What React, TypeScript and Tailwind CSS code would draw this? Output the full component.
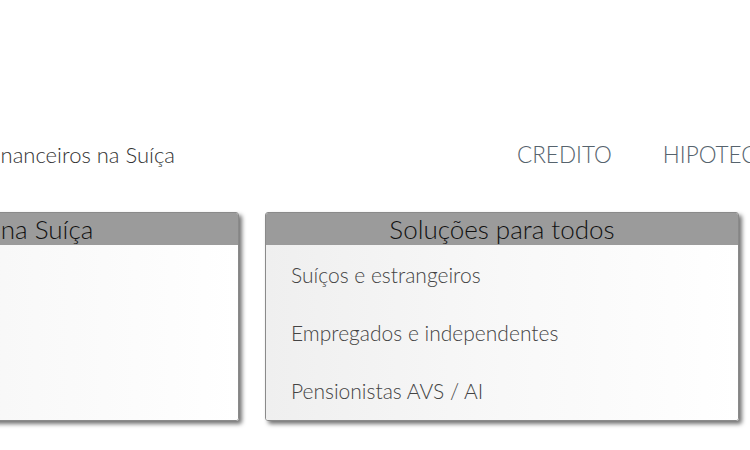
const items = ["Suíços e estrangeiros", "Empregados e independentes", "Pensionistas AVS / AI"];

function Card({ title, rows }: { title: string; rows: string[] }) {
    return (
        <div className="w-[474px] h-[209px] flex flex-col border border-[#8a8a8a] rounded-[3px] shadow-[3px_3px_4px_rgba(0,0,0,0.55)] overflow-hidden">
            <div className="h-[32px] bg-[#9b9b9b] text-[#111] text-[26px] leading-[33px] text-center">{title}</div>
            <ul className="flex-1 bg-linear-to-r from-[#efefef] via-[#f8f8f8] to-white pl-[25px] pt-[17px]">
                {rows.map((r) => (
                    <li key={r} className="h-[58px] text-[21px] leading-[26px] text-[#444]">{r}</li>
                ))}
            </ul>
        </div>
    );
}

export default function App() {
    return (
        <div className="w-[750px] h-[450px] overflow-hidden bg-white font-['Lato',sans-serif] font-light">
            <div className="ml-[-235px] w-[1260px]">

                <header className="pt-[140px] flex items-center h-[170px]">
                    <div className="w-[410px] flex justify-end">
                        <p className="text-[22px] leading-[30px] text-[#333] whitespace-nowrap">Serviços financeiros na Suíça</p>
                    </div>
                    <nav className="ml-[342px] flex gap-[51px] text-[22.5px] leading-[30px] text-[#56636d]">
                        <a>CREDITO</a>
                        <a>HIPOTECA</a>
                        <a>SEGUROS</a>
                    </nav>
                </header>

                <div className="mt-[42px] flex gap-[26px]">
                    <Card title="Crédito na Suíça" rows={[]} />
                    <Card title="Soluções para todos" rows={items} />
                </div>

            </div>
        </div>
    );
}
